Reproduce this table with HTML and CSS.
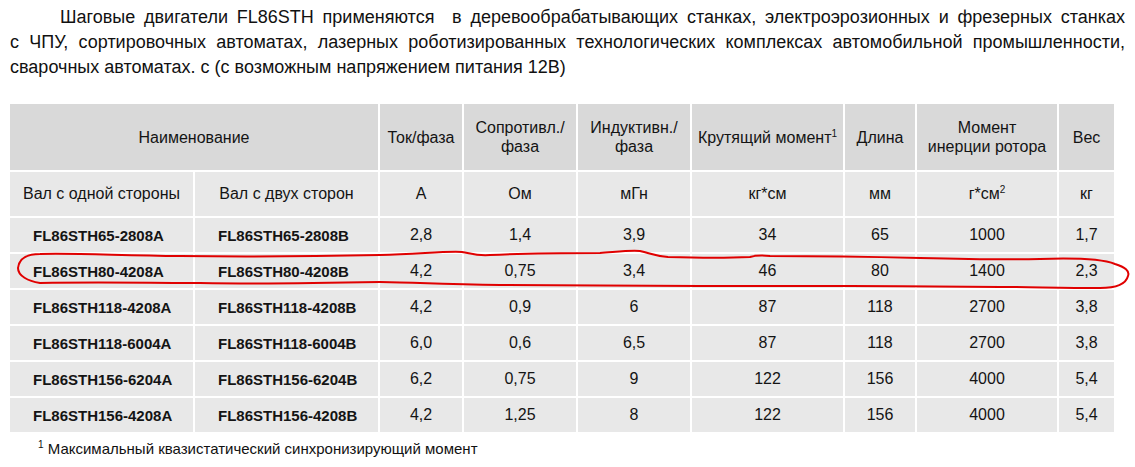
FILE: index.html
```html
<!DOCTYPE html>
<html lang="ru">
<head>
<meta charset="utf-8">
<link rel="stylesheet" href="styles.css">
</head>
<body>
<p class="intro">Шаговые двигатели FL86STH применяются&nbsp; в деревообрабатывающих станках, электроэрозионных и фрезерных станках с&nbsp;ЧПУ, сортировочных автоматах, лазерных роботизированных технологических комплексах автомобильной промышленности, сварочных автоматах. с (с возможным напряжением питания 12В)</p>
<div class="table-wrap">
<table class="specs">
<colgroup>
<col class="c-a"><col class="c-b"><col class="c-i"><col class="c-r"><col class="c-l"><col class="c-t"><col class="c-len"><col class="c-mom"><col class="c-w">
</colgroup>
<thead>
<tr class="head">
<th colspan="2">Наименование</th>
<th>Ток/фаза</th>
<th>Сопротивл./<br>фаза</th>
<th>Индуктивн./<br>фаза</th>
<th>Крутящий момент<sup>1</sup></th>
<th>Длина</th>
<th>Момент<br>инерции ротора</th>
<th>Вес</th>
</tr>
<tr class="units">
<td>Вал с одной стороны</td>
<td>Вал с двух сторон</td>
<td>А</td>
<td>Ом</td>
<td>мГн</td>
<td>кг*см</td>
<td>мм</td>
<td>г*см<sup>2</sup></td>
<td>кг</td>
</tr>
</thead>
<tbody>
<tr><td class="model">FL86STH65-2808A</td><td class="model">FL86STH65-2808B</td><td>2,8</td><td>1,4</td><td>3,9</td><td>34</td><td>65</td><td>1000</td><td>1,7</td></tr>
<tr><td class="model">FL86STH80-4208A</td><td class="model">FL86STH80-4208B</td><td>4,2</td><td>0,75</td><td>3,4</td><td>46</td><td>80</td><td>1400</td><td>2,3</td></tr>
<tr><td class="model">FL86STH118-4208A</td><td class="model">FL86STH118-4208B</td><td>4,2</td><td>0,9</td><td>6</td><td>87</td><td>118</td><td>2700</td><td>3,8</td></tr>
<tr><td class="model">FL86STH118-6004A</td><td class="model">FL86STH118-6004B</td><td>6,0</td><td>0,6</td><td>6,5</td><td>87</td><td>118</td><td>2700</td><td>3,8</td></tr>
<tr><td class="model">FL86STH156-6204A</td><td class="model">FL86STH156-6204B</td><td>6,2</td><td>0,75</td><td>9</td><td>122</td><td>156</td><td>4000</td><td>5,4</td></tr>
<tr><td class="model">FL86STH156-4208A</td><td class="model">FL86STH156-4208B</td><td>4,2</td><td>1,25</td><td>8</td><td>122</td><td>156</td><td>4000</td><td>5,4</td></tr>
</tbody>
</table>
<svg class="mark" width="1135" height="60" viewBox="0 245 1135 60" xmlns="http://www.w3.org/2000/svg">
<path d="M40 283 C28 281 18 276 18 268 C19 259 26 254 40 254 C70 253 110 255 180 256 C260 257 330 256 380 255 C420 254 445 251 462 252 C470 253 475 256 490 255 C530 253 560 253 600 253 C615 252 630 250 640 251 C650 253 655 256 668 257 C700 258 730 258 750 257 C756 255 760 255 770 256 C820 256 880 257 920 258 C960 259 1000 260 1040 259 C1070 258 1100 258 1115 264 C1125 267 1130 271 1128 276 C1126 284 1118 288 1100 288 C1060 288 1030 287 1000 287 C960 287 900 286 850 286 C800 286 760 286 700 286 C640 286 560 285 500 285 C440 284 400 282 380 282 C330 283 260 284 200 283 C150 283 100 282 40 283 Z" fill="none" stroke="#e00000" stroke-width="2"/>
</svg>
</div>
<p class="note"><sup>1</sup> Максимальный квазистатический синхронизирующий момент</p>
</body>
</html>
```

FILE: styles.css
```css
html, body {
  margin: 0;
  padding: 0;
  background: #ffffff;
}

body {
  font-family: "Liberation Sans", Arial, sans-serif;
  color: #111111;
}

.intro {
  margin: 5px 10px 0 10px;
  font-size: 18px;
  line-height: 25px;
  text-align: justify;
  text-indent: 50px;
}

.table-wrap {
  position: relative;
  margin-top: 22px;
}

.specs {
  margin-left: 8px;
  width: 1108px;
  table-layout: fixed;
  border-collapse: separate;
  border-spacing: 2px;
  font-size: 16px;
  color: #141414;
}

.c-a, .c-b { width: 183px; }
.c-i { width: 82px; }
.c-r, .c-l { width: 112px; }
.c-t { width: 151px; }
.c-len { width: 70px; }
.c-mom { width: 140px; }
.c-w { width: 55px; }

.specs th,
.specs td {
  padding: 0;
  text-align: center;
  vertical-align: middle;
  background: #e8e8e8;
}

.head th {
  height: 66px;
  font-weight: normal;
  background: #d9d9d9;
  line-height: 19px;
}

.units td {
  height: 44px;
}

.specs tbody td {
  height: 34px;
}

.specs td.model {
  text-align: left;
  padding-left: 23px;
  font-weight: bold;
  font-size: 15px;
}

.specs sup {
  font-size: 10px;
  line-height: 0;
  vertical-align: 6px;
}

.mark {
  position: absolute;
  left: 0;
  top: 143px;
  pointer-events: none;
}

.note {
  margin: 6px 0 0 38px;
  font-size: 15px;
  line-height: 18px;
}

.note sup {
  font-size: 10px;
  line-height: 0;
  vertical-align: 6px;
}
```
